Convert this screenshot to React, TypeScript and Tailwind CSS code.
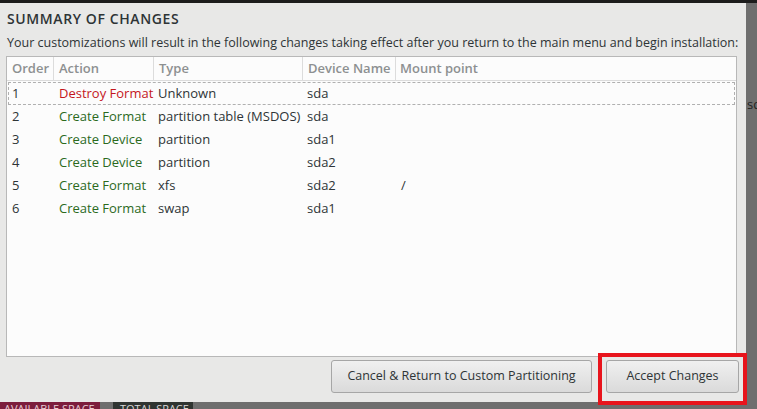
import React from 'react';

interface Change {
  order: number;
  action: string;
  type: string;
  device: string;
  mount: string;
  destroy?: boolean;
}

const changes: Change[] = [
  { order: 1, action: 'Destroy Format', type: 'Unknown', device: 'sda', mount: '', destroy: true },
  { order: 2, action: 'Create Format', type: 'partition table (MSDOS)', device: 'sda', mount: '' },
  { order: 3, action: 'Create Device', type: 'partition', device: 'sda1', mount: '' },
  { order: 4, action: 'Create Device', type: 'partition', device: 'sda2', mount: '' },
  { order: 5, action: 'Create Format', type: 'xfs', device: 'sda2', mount: '/' },
  { order: 6, action: 'Create Format', type: 'swap', device: 'sda1', mount: '' }
];

const font = { fontFamily: '"Open Sans", "DejaVu Sans", sans-serif' };

const App: React.FC = () => {
  return (
    <div className="relative w-[757px] h-[409px] overflow-hidden bg-[#6e6e6e] flex flex-col text-[#2e3436]" style={font}>
      <div className="h-[3px] bg-[#1c1c1c]" />
      <div className="flex h-[399px]">
        {/* Dialog */}
        <div className="w-[746px] bg-[#e8e8e7] flex flex-col px-[6px]">
          <h1 className="mt-[7px] pl-[1px] text-[14px] font-semibold leading-[18px] tracking-[0.6px] text-[#2e3436]">
            SUMMARY OF CHANGES
          </h1>
          <p className="mt-[6px] pl-[1px] text-[12.5px] leading-[18px] whitespace-nowrap">
            Your customizations will result in the following changes taking effect after you return to the main menu and begin installation:
          </p>
          <div className="mt-[4px] w-[731px] h-[301px] bg-[#fcfcfc] border border-[#b8b8b8] flex flex-col text-[13px]">
            <div className="flex h-[24px] items-center border-b border-[#dcdcdc] font-semibold text-[#8d9091]">
              <div className="w-[47px] pl-[5px] border-r border-[#dcdcdc] h-full flex items-center">Order</div>
              <div className="w-[100px] pl-[5px] border-r border-[#dcdcdc] h-full flex items-center">Action</div>
              <div className="w-[149px] pl-[5px] border-r border-[#dcdcdc] h-full flex items-center">Type</div>
              <div className="w-[93px] pl-[5px] border-r border-[#dcdcdc] h-full flex items-center">Device Name</div>
              <div className="flex-1 pl-[4px] h-full flex items-center">Mount point</div>
            </div>
            <div className="pt-[1px] px-[1px]">
              {changes.map(c => (
                <div
                  key={c.order}
                  className={`flex h-[23px] items-center ${c.order === 1 ? 'border border-dashed border-[#b0b0b0]' : 'border border-transparent'}`}
                >
                  <div className="w-[45px] pl-[3px]">{c.order}</div>
                  <div className={`w-[100px] pl-[5px] ${c.destroy ? 'text-[#c4161c]' : 'text-[#2b6a1c]'}`}>{c.action}</div>
                  <div className="w-[149px] pl-[4px] whitespace-nowrap">{c.type}</div>
                  <div className="w-[93px] pl-[4px]">{c.device}</div>
                  <div className="flex-1 pl-[5px]">{c.mount}</div>
                </div>
              ))}
            </div>
          </div>
          <div className="mt-[3px] flex justify-end gap-[14px] pr-[1px]">
            <button className="w-[261px] h-[33px] rounded-[3px] border border-[#a6a6a6] bg-gradient-to-b from-[#f0f0f0] to-[#dadada] text-[12.5px] text-[#2e3436]">
              Cancel &amp; Return to Custom Partitioning
            </button>
            <button className="w-[133px] h-[33px] rounded-[3px] border border-[#a6a6a6] bg-gradient-to-b from-[#f0f0f0] to-[#dadada] text-[12.5px] text-[#2e3436]">
              Accept Changes
            </button>
          </div>
        </div>
        {/* Background window peeking out */}
        <div className="flex-1 relative overflow-hidden">
          <span className="absolute left-[1px] top-[92px] text-[13px] text-[#222] whitespace-nowrap">sd</span>
        </div>
      </div>
      <div className="flex h-[7px] text-[11px] leading-[12px] uppercase text-[#e6d0d6]">
        <div className="w-[100px] bg-[#7c1d3c] pl-[4px] pt-[1px] overflow-hidden whitespace-nowrap">Available Space</div>
        <div className="w-[13px]" />
        <div className="w-[80px] bg-[#2f3431] pl-[7px] pt-[1px] overflow-hidden whitespace-nowrap text-[#d8d8d8]">Total Space</div>
      </div>
      {/* Red highlight overlay */}
      <div className="absolute left-[598px] top-[353px] w-[149px] h-[52px] border-[4px] border-[#e8141c]" />
    </div>
  );
};

export default App;
